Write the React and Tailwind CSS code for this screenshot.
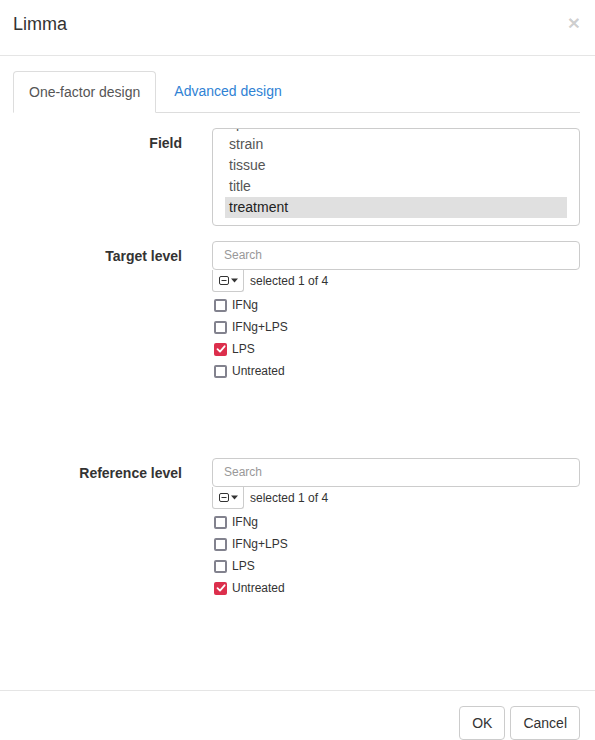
import React from "react";

const FIELDS = ["species", "strain", "tissue", "title", "treatment"];
const LEVELS = ["IFNg", "IFNg+LPS", "LPS", "Untreated"];

function Check({ checked }) {
  if (checked) {
    return (
      <span className="flex h-[13px] w-[13px] items-center justify-center rounded-[2px] bg-[#dc2f4c]">
        <svg width="10" height="10" viewBox="0 0 10 10">
          <path d="M1.5 5.2 L4 7.6 L8.6 2.3" fill="none" stroke="#fff" strokeWidth="1.8" strokeLinecap="round" strokeLinejoin="round" />
        </svg>
      </span>
    );
  }
  return <span className="h-[13px] w-[13px] rounded-[2px] border-2 border-[#82828e] bg-white" />;
}

// search box + toggle + checkbox list, same shape for target and reference
function LevelPicker({ selected }) {
  return (
    <div className="h-[202px]">
      <div className="flex h-[29px] items-center rounded-[4px] border border-[#ccc] px-[11px] pb-px text-[12px] text-[#999]">
        Search
      </div>
      <div className="flex h-[22px] items-center">
        <div className="flex h-[22px] w-[32px] items-center justify-center gap-[2px] rounded-b-[3px] border border-t-0 border-[#ccc]">
          <svg width="10" height="9" viewBox="0 0 10 9">
            <rect x="0.5" y="0.5" width="9" height="8" rx="1.5" fill="none" stroke="#333" strokeWidth="1" />
            <path d="M2.5 4.5 H7.5" stroke="#333" strokeWidth="1" />
          </svg>
          <svg width="7" height="5" viewBox="0 0 7 5">
            <path d="M0 0.5 H7 L3.5 4.5 Z" fill="#333" />
          </svg>
        </div>
        <span className="ml-[6px] text-[12px] text-[#333]">selected 1 of 4</span>
      </div>
      <div className="mt-[2px] flex flex-col">
        {LEVELS.map((l) => (
          <div key={l} className="flex h-[22px] items-center pl-[2px]">
            <Check checked={l === selected} />
            <span className="ml-[5px] text-[12px] text-[#333]">{l}</span>
          </div>
        ))}
      </div>
    </div>
  );
}

function Row({ label, children }) {
  return (
    <div className="mb-[15px] flex">
      <div className="w-[169px] pt-[5px] text-right text-[14px] font-bold leading-[20px] text-[#333]">{label}</div>
      <div className="ml-[30px] flex-1">{children}</div>
    </div>
  );
}

export default function App() {
  return (
    <div className="h-[740px] w-[595px] overflow-hidden bg-white font-['Liberation_Sans',Arial,sans-serif] text-[#333]">
      <div className="flex h-[56px] items-start justify-between border-b border-[#e5e5e5] pl-[13px] pr-[15px] pt-[12px]">
        <h4 className="text-[18px] leading-[25px] text-[#333]">Limma</h4>
        <span className="text-[21px] font-bold leading-[21px] text-black/20">×</span>
      </div>

      <div className="pb-[15px] pl-[13px] pr-[15px] pt-[15px]">
        <div className="flex border-b border-[#ddd]">
          <div className="-mb-px rounded-t-[4px] border border-b-white border-[#ddd] bg-white px-[15px] py-[10px] text-[14px] leading-[20px] text-[#555]">
            One-factor design
          </div>
          <div className="ml-[2px] px-[16px] py-[10px] text-[14px] leading-[20px] text-[#2f82d4]">Advanced design</div>
        </div>

        <div className="pt-[15px]">
          <Row label="Field">
            <div className="h-[98px] overflow-hidden rounded-[4px] border border-[#ccc] px-[12px]">
              <div className="-mt-[16px]">
                {FIELDS.map((f) => (
                  <div
                    key={f}
                    className={
                      "h-[21px] pl-[4px] text-[14px] leading-[20px] " +
                      (f === "treatment" ? "bg-[#e0e0e0] text-[#222]" : "text-[#555]")
                    }
                  >
                    {f}
                  </div>
                ))}
              </div>
            </div>
          </Row>
          <Row label="Target level">
            <LevelPicker selected="LPS" />
          </Row>
          <Row label="Reference level">
            <LevelPicker selected="Untreated" />
          </Row>
        </div>
      </div>

      <div className="flex justify-end gap-[5px] border-t border-[#e5e5e5] px-[15px] pt-[15px]">
        <button className="h-[34px] rounded-[4px] border border-[#ccc] bg-white px-[12px] text-[14px] text-[#333]">OK</button>
        <button className="h-[34px] rounded-[4px] border border-[#ccc] bg-white px-[12px] text-[14px] text-[#333]">Cancel</button>
      </div>
    </div>
  );
}
